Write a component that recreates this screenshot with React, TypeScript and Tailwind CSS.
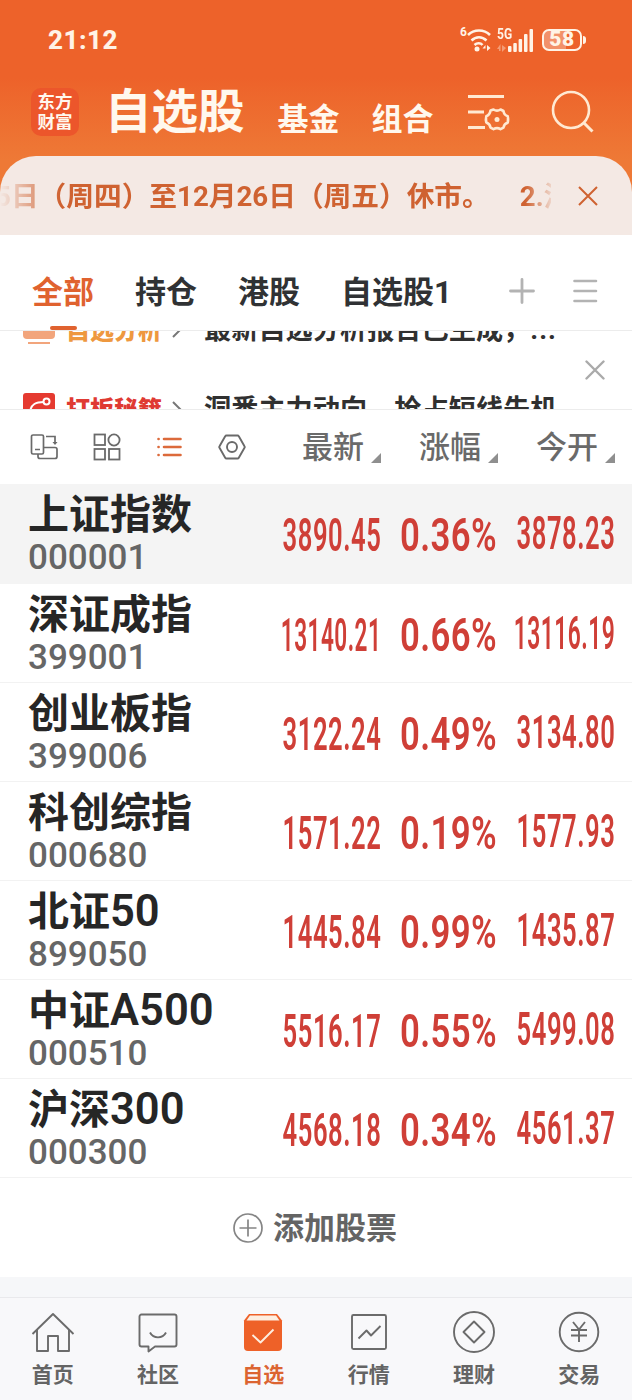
import React from "react";

type Quote = {
    name: string;
    suffix?: string;
    code: string;
    last: string;
    change: string;
    open: string;
};

const quotes: Quote[] = [
    { name: "上证指数", code: "000001", last: "3890.45", change: "0.36%", open: "3878.23" },
    { name: "深证成指", code: "399001", last: "13140.21", change: "0.66%", open: "13116.19" },
    { name: "创业板指", code: "399006", last: "3122.24", change: "0.49%", open: "3134.80" },
    { name: "科创综指", code: "000680", last: "1571.22", change: "0.19%", open: "1577.93" },
    { name: "北证", suffix: "50", code: "899050", last: "1445.84", change: "0.99%", open: "1435.87" },
    { name: "中证", suffix: "A500", code: "000510", last: "5516.17", change: "0.55%", open: "5499.08" },
    { name: "沪深", suffix: "300", code: "000300", last: "4568.18", change: "0.34%", open: "4561.37" },
];

const columns = ["最新", "涨幅", "今开"];

const navItems: { label: string; icon: React.ReactNode; active?: boolean }[] = [
    {
        label: "首页",
        icon: (
            <>
                <path d="M1.5 22 22 2l20.5 20" />
                <path d="M6 18v21h11V24h10v15h11V18" />
            </>
        ),
    },
    {
        label: "社区",
        icon: (
            <>
                <path d="M5.500 2.500h33a2 2 0 0 1 2 2v28a2 2 0 0 1-2 2H19l-6.500 5v-5h-7a2 2 0 0 1-2-2v-28a2 2 0 0 1 2-2z" />
                <path d="M14 20.500c3.500 6.500 12.500 6.500 16 0" />
            </>
        ),
    },
    {
        label: "自选",
        active: true,
        icon: (
            <>
                <path d="M8 2h28l5 6.500V35a4 4 0 0 1-4 4H7a4 4 0 0 1-4-4V8.500z" fill="#ee6128" stroke="none" />
                <path d="M9 3.500h26l3.500 5h-33z" fill="#fdeee0" stroke="none" />
                <path d="m11.500 23 8 7.500 13-13" stroke="#fdeee0" />
            </>
        ),
    },
    {
        label: "行情",
        icon: (
            <>
                <rect x="5" y="3" width="34" height="34" rx="1.500" />
                <path d="m11.500 26.500 8-8 4.500 5 9.500-9.500" />
            </>
        ),
    },
    {
        label: "理财",
        icon: (
            <>
                <circle cx="22" cy="20" r="20" />
                <path d="m22 9.500 10.500 10.500L22 30.500 11.500 20z" />
            </>
        ),
    },
    {
        label: "交易",
        icon: (
            <>
                <circle cx="22" cy="20" r="19.300" />
                <path d="m16 10 6 7.500 6-7.500M14 18h16M14 23.500h16M22 17.500V30" />
            </>
        ),
    },
];

function StatusBar() {
    return (
        <div className="flex h-[78px] items-center justify-between pr-[46px] pl-[48px]">
            <span className="mt-px text-[26px] leading-none font-extrabold tracking-[0.5px] text-[#fff3e6]">21:12</span>
            <div className="mt-px flex items-center text-[#fff3e6]">
                <span className="-mt-4 text-[12px] leading-none font-bold">6</span>
                <svg width="24" height="24" viewBox="0 0 24 24" fill="none" stroke="currentColor" strokeWidth="2.600">
                    <path d="M1 7c6-6 16-6 22 0M4.500 12.500c4.500-4.300 10.500-4.300 15 0" />
                    <path d="M7.500 17c2.500-2.300 6-2.300 8 0" />
                    <circle cx="10" cy="21" r="2.500" fill="currentColor" stroke="none" />
                    <path d="m18.500 17-3 3.500h3zM20 17v6l3.500-3z" fill="currentColor" stroke="none" />
                </svg>
                <div className="ml-[6px] flex h-6 items-end">
                    <div className="flex h-6 w-[15px] flex-col items-start justify-between">
                        <span className="-mt-px origin-left scale-x-[0.86] text-[14px] leading-[14px] font-bold">5G</span>
                        <svg width="9" height="8" viewBox="0 0 9 8" fill="currentColor" className="opacity-40">
                            <path d="M3.500 0v7H2V5H0zM5 1v7l4-4z" />
                        </svg>
                    </div>
                    <svg width="28" height="24" viewBox="0 0 28 24" fill="currentColor" className="-ml-[5px]">
                        <rect x="1" y="18" width="3.500" height="6" rx="1" />
                        <rect x="6.300" y="15" width="3.500" height="9" rx="1" />
                        <rect x="11.600" y="11" width="3.500" height="13" rx="1" />
                        <rect x="17" y="6" width="3.500" height="18" rx="1" />
                        <rect x="22.500" y="1" width="3.500" height="23" rx="1" />
                    </svg>
                </div>
                <div className="ml-[7px] flex h-[22px] w-10 items-center justify-center rounded-[7px] border-2 border-current bg-linear-to-r from-white/30 from-60% to-transparent to-60%">
                    <span className="text-[21px] leading-none font-black tracking-[0.5px]">58</span>
                </div>
                <div className="ml-[1px] h-2 w-[3px] rounded-r-full bg-current" />
            </div>
        </div>
    );
}

function Header() {
    return (
        <div className="flex h-[78px] text-[#fff8ee]">
            <div className="mt-[10px] ml-[31px] flex h-[48px] w-[48px] flex-col items-center justify-center rounded-[10px] bg-[#ec562b] text-[17.500px] leading-[20px] font-bold">
                <span>东方</span>
                <span>财富</span>
            </div>
            <span className="ml-[26px] text-[46.500px] leading-[69px] font-bold">自选股</span>
            <span className="ml-[33px] text-[31px] leading-[84px] font-bold">基金</span>
            <span className="ml-8 text-[31px] leading-[84px] font-bold">组合</span>
            <svg width="44" height="40" viewBox="0 0 44 40" fill="none" stroke="#ffe9d2" strokeWidth="2.800" className="mt-[15px] ml-[33px]">
                <path d="M1 3.500h36M1 19h16M1 34.500h17" />
                <path d="M23.500 17.500q1.800-.6 3-1 3.500 2.200 7 0l3 1.500q.3 3.800 4.200 5.200.8 3.300 0 6.600-3.600 1-4.200 4.800l-3 1.600q-3.500-2.200-7 0l-3-1.600q-.6-4-4.200-5.200-.8-2.900 0-6.200 3.500-1.200 4.200-5.700z" strokeWidth="2.600" strokeLinejoin="round" />
                <circle cx="30" cy="26.500" r="2.500" fill="#ffe9d2" stroke="none" />
            </svg>
            <svg width="44" height="44" viewBox="0 0 44 44" fill="none" stroke="#ffe9d2" strokeWidth="2.600" className="mt-[12px] ml-[40px]">
                <circle cx="20" cy="20" r="18" />
                <path d="m32.500 32.500 9 9" strokeWidth="3" />
            </svg>
        </div>
    );
}

function Notice() {
    return (
        <div className="flex h-[79px] items-center rounded-t-[36px] bg-[#f4e9e4]">
            <div className="w-[551px] overflow-hidden [mask-image:linear-gradient(to_right,transparent,black_60px,black_525px,transparent_556px)]">
                <div className="mt-[2px] -ml-[5px] text-[27.700px] leading-[40px] font-bold whitespace-pre text-[#cf6231]">
                    5日（周四）至12月26日（周五）休市。<span className="ml-[30px]">2.港</span>
                </div>
            </div>
            <svg width="20" height="20" viewBox="0 0 20 20" fill="none" stroke="#cf6231" strokeWidth="2" className="ml-[27px]">
                <path d="m1 1 18 18M19 1 1 19" />
            </svg>
        </div>
    );
}

function Tabs() {
    return (
        <div className="flex h-[96px] border-b border-[#ececec] pl-8 text-[31px] leading-[115px] font-bold text-[#303234]">
            <div className="flex w-[62px] flex-col items-center text-[#e0622f]">
                <span className="h-[91px]">全部</span>
                <div className="h-1 w-[27px] shrink-0 rounded-full bg-[#e0622f]" />
            </div>
            <span className="ml-[41px]">持仓</span>
            <span className="ml-[41px]">港股</span>
            <span className="ml-[41px]">自选股1</span>
            <div className="mt-[42px] ml-auto flex items-start pr-[34px]">
                <svg width="26" height="28" viewBox="0 0 26 28" fill="none" stroke="#b3b3b3" strokeWidth="2.800" strokeLinecap="round">
                    <path d="M13 2.500v23M1.500 14h23" />
                </svg>
                <svg width="26" height="28" viewBox="0 0 26 28" fill="none" stroke="#b3b3b3" strokeWidth="2.600" strokeLinecap="round" className="ml-[37px]">
                    <path d="M2.500 4H24M2.500 14H24M2.500 24H24" />
                </svg>
            </div>
        </div>
    );
}

/* Two scrolling promo lines, both partly clipped by the strip */
function PromoStrip() {
    return (
        <div className="flex h-[79px] overflow-hidden border-b border-[#ececec]">
            <div className="-mt-[20px] w-[562px] shrink-0">
                <div className="flex h-[39px] items-center pl-[23px]">
                    <svg width="32" height="34" viewBox="0 0 32 34" fill="none">
                        <path d="M0 0h32v21a4 4 0 0 1-4 4H4a4 4 0 0 1-4-4z" fill="#f2a57c" />
                        <path d="M5 29h22" stroke="#f2a57c" strokeWidth="2" />
                    </svg>
                    <span className="ml-[11px] text-[24px] leading-[34px] font-black text-[#ee983f]">自选分析</span>
                    <svg width="12" height="22" viewBox="0 0 12 22" fill="none" stroke="#777" strokeWidth="2" className="-mt-[6px] ml-[10px]">
                        <path d="m1 2 9 9-9 9" />
                    </svg>
                    <span className="ml-5 text-[27.200px] font-bold whitespace-nowrap text-[#303030]">最新自选分析报告已生成，<span className="tracking-[1px]">...</span></span>
                </div>
                <div className="mt-[39px] flex h-[42px] items-center pl-[23px]">
                    <svg width="32" height="34" viewBox="0 0 32 34" fill="none">
                        <rect width="32" height="34" rx="3" fill="#e53a30" />
                        <path d="M7 19c1-8 6-10 14-10" stroke="#fff" strokeWidth="2" />
                        <circle cx="23.500" cy="8.500" r="3" stroke="#fff" strokeWidth="2" />
                    </svg>
                    <span className="ml-[11px] text-[24px] leading-[34px] font-black text-[#df3a33]">打板秘籍</span>
                    <svg width="12" height="22" viewBox="0 0 12 22" fill="none" stroke="#777" strokeWidth="2" className="mt-[2px] ml-[10px]">
                        <path d="m1 2 9 9-9 9" />
                    </svg>
                    <span className="ml-5 text-[27.200px] font-bold whitespace-nowrap text-[#303030]">洞悉主力动向，抢占短线先机</span>
                </div>
            </div>
            <svg width="20" height="20" viewBox="0 0 20 20" fill="none" stroke="#aaa" strokeWidth="2.400" strokeLinecap="round" className="mt-[29px] ml-[23px]">
                <path d="m1.500 1.500 17 17M18.500 1.500l-17 17" />
            </svg>
        </div>
    );
}

function ColumnBar() {
    return (
        <div className="flex h-[74px] items-center pl-[30px] text-[#6a6a6a]">
            <svg width="28" height="28" viewBox="0 0 28 28" fill="none" stroke="currentColor" strokeWidth="1.700">
                <rect x="1.500" y="2" width="12" height="19" rx="1.500" />
                <path d="M5 16.500h5M16 3.500h9V10" />
                <path d="M22.500 9h5L25 12z" fill="currentColor" stroke="none" />
                <path d="M13.500 14.500h11.500a2 2 0 0 1 2 2v7a2 2 0 0 1-2 2h-15a2 2 0 0 1-2-2V21" />
            </svg>
            <svg width="28" height="28" viewBox="0 0 28 28" fill="none" stroke="currentColor" strokeWidth="1.800" className="ml-[35px]">
                <rect x="1.500" y="1.500" width="10.500" height="10.500" />
                <circle cx="21" cy="7" r="5.600" />
                <rect x="1.500" y="16" width="10.500" height="10.500" />
                <rect x="16" y="16" width="10.500" height="10.500" />
            </svg>
            <svg width="26" height="24" viewBox="0 0 26 24" fill="none" stroke="#dc6a3b" strokeWidth="2.600" strokeLinecap="round" className="ml-[35px]">
                <path d="M2.500 4h.1M8 4h16.500M2.500 12h.1M8 12h16.500M2.500 20h.1M8 20h16.500" />
            </svg>
            <svg width="28" height="28" viewBox="0 0 28 28" fill="none" stroke="currentColor" strokeWidth="1.900" strokeLinejoin="round" className="ml-[36px]">
                <path d="M8.500 2.500h11a1.500 1.500 0 0 1 1.300.8l5.700 9.900a1.500 1.500 0 0 1 0 1.600l-5.700 9.900a1.500 1.500 0 0 1-1.300.8h-11a1.500 1.500 0 0 1-1.300-.8L1.500 14.800a1.500 1.500 0 0 1 0-1.600l5.700-9.900a1.500 1.500 0 0 1 1.300-.8z" />
                <circle cx="14" cy="14" r="5" />
            </svg>
            <div className="ml-[56px] flex gap-[38px]">
                {columns.map((label) => (
                    <div key={label} className="flex items-end gap-[7px]">
                        <span className="-mb-px text-[31px] leading-[44px] font-medium">{label}</span>
                        <svg width="10" height="10" viewBox="0 0 10 10" fill="#8f8f8f" className="mb-[6px]">
                            <path d="M10 0v10H0z" />
                        </svg>
                    </div>
                ))}
            </div>
        </div>
    );
}

function QuoteRow({ quote, selected }: { quote: Quote; selected: boolean }) {
    return (
        <div
            className={`flex border-b font-semibold text-[#cf3f37] ${selected ? "h-[100px] border-[#f4f4f4] bg-[#f4f4f4]" : "h-[99px] border-[#f2f2f2]"
                }`}
        >
            <div className="w-[261px] pl-[28px]">
                <div className="mt-[7px] h-[48px] text-[41px] leading-[48px] font-bold whitespace-nowrap text-[#262626]">
                    {quote.name}
                    {quote.suffix && <span className="text-[43.500px] leading-none font-semibold">{quote.suffix}</span>}
                </div>
                <div className="text-[35px] leading-[38px] font-medium text-[#666]">{quote.code}</div>
            </div>
            <div className="flex w-[120px] justify-end">
                <span className={`origin-right text-[47px] leading-[101px] tracking-[1px] ${quote.last.length > 7 ? "scale-x-[0.48]" : "scale-x-[0.545]"}`}>{quote.last}</span>
            </div>
            <div className="flex w-[116px] justify-end">
                <span className="origin-right scale-x-[0.74] text-[47px] leading-[101px] tracking-[0.5px]">{quote.change}</span>
            </div>
            <div className="flex w-[118px] justify-end">
                <span className={`origin-right text-[47px] leading-[97px] tracking-[1px] ${quote.open.length > 7 ? "scale-x-[0.485]" : "scale-x-[0.545]"}`}>{quote.open}</span>
            </div>
        </div>
    );
}

function BottomNav() {
    return (
        <nav className="grid h-[103px] shrink-0 grid-cols-6 border-t border-[#e9e9ec] bg-[#f8f8fa] pt-[13px]">
            {navItems.map((item) => (
                <div key={item.label} className="flex flex-col items-center">
                    <svg width="44" height="42" viewBox="0 -1 44 42" fill="none" stroke="#6b6b6b" strokeWidth="1.900" strokeLinejoin="round">
                        {item.icon}
                    </svg>
                    <span className={`mt-[6px] text-[21px] leading-[32px] font-bold ${item.active ? "text-[#dc6431]" : "text-[#646464]"}`}>
                        {item.label}
                    </span>
                </div>
            ))}
        </nav>
    );
}

export default function App() {
    return (
        <div className="flex h-[1400px] w-[632px] flex-col overflow-hidden bg-white font-[Roboto,'Noto_Sans_CJK_SC',sans-serif]">
            <div className="bg-linear-to-b from-[#ed622a] from-[78px] to-[#ee7936] to-[160px]">
                <StatusBar />
                <Header />
                <Notice />
            </div>
            <Tabs />
            <PromoStrip />
            <ColumnBar />
            {quotes.map((quote, i) => (
                <QuoteRow key={quote.code} quote={quote} selected={i === 0} />
            ))}
            <div className="flex h-[99px] items-center justify-center gap-[10px]">
                <svg width="30" height="30" viewBox="0 0 30 30" fill="none" stroke="#858585" strokeWidth="1.700" className="-ml-[2px]">
                    <circle cx="15" cy="15" r="14" />
                    <path d="M15 6.500v17M6.500 15h17" />
                </svg>
                <span className="mt-[2px] text-[31px] leading-[46px] font-bold text-[#646464]">添加股票</span>
            </div>
            <div className="h-5 bg-[#f6f7f9]" />
            <BottomNav />
        </div>
    );
}
